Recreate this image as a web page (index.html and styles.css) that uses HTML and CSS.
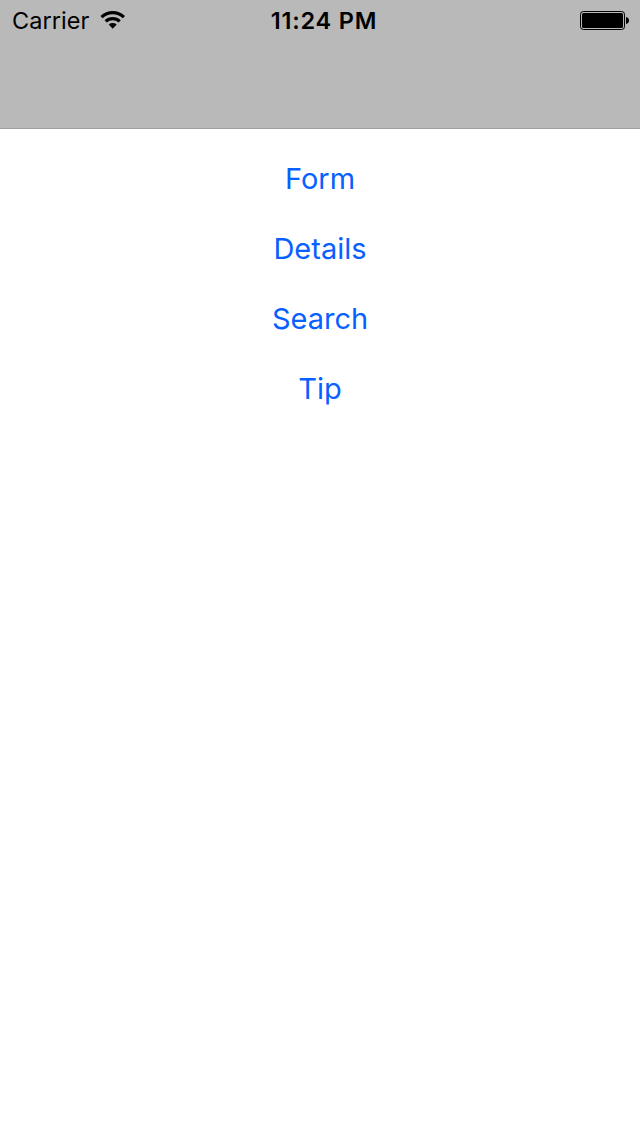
FILE: index.html
```html
<!DOCTYPE html>
<html lang="en">
<head>
<meta charset="utf-8">
<title>Menu</title>
<link rel="stylesheet" href="styles.css">
</head>
<body>
<header class="navbar">
  <div class="status">
    <div class="status-left">
      <span class="carrier">Carrier</span>
      <svg class="wifi" width="26" height="19" viewBox="0 0 26 19">
        <path d="M0.4 4.9Q5.8 0 12.7 0T25 4.9L22.8 7.2Q18.4 3.2 12.7 3.2T2.6 7.2Z"/>
        <path d="M4.6 9.2Q8 6.1 12.7 6.1T20.8 9.2L18.6 11.5Q16 9.3 12.7 9.3T6.8 11.5Z"/>
        <path d="M8.7 13.5Q10.4 12.1 12.7 12.1T16.7 13.5L12.7 17.8Z"/>
      </svg>
    </div>
    <span class="time">11:24 PM</span>
    <div class="status-right">
      <svg class="battery" width="50" height="19" viewBox="0 0 50 19">
        <rect x="0.5" y="0.5" width="44" height="18" rx="2.8" fill="none" stroke="#000"/>
        <rect x="2" y="2" width="41" height="15" rx="1.5"/>
        <path d="M46 6Q49 6.8 49 9.5T46 13Z"/>
      </svg>
    </div>
  </div>
</header>
<main class="menu">
  <a class="item form">Form</a>
  <a class="item details">Details</a>
  <a class="item search">Search</a>
  <a class="item tip">Tip</a>
</main>
</body>
</html>
```
FILE: styles.css
```css
body {
  margin: 0;
  min-height: 1136px;
  background: #fff;
  font-family: Inter, "Liberation Sans", sans-serif;
}
.navbar {
  box-sizing: border-box;
  height: 129px;
  background: #b9b9b9;
  border-bottom: 1px solid #a0a0a0;
}
.status {
  display: grid;
  grid-template-columns: 1fr auto 1fr;
  height: 41px;
  align-items: center;
  padding: 0 10px 0 12px;
  font-size: 23.5px;
  line-height: 41px;
}
.status-left { display: flex; align-items: center; gap: 11px; }
.status-right { display: flex; justify-content: flex-end; }
.wifi { margin-top: -1px; }
.carrier { letter-spacing: 0.05px; }
.time {
  font-weight: 600;
  font-size: 23.5px;
  letter-spacing: 0.8px;
  padding-left: 6px;
}
.menu {
  display: flex;
  flex-direction: column;
  align-items: center;
  padding-top: 15px;
}
.item {
  height: 70px;
  line-height: 69px;
  font-size: 29px;
  color: #0861ff;
}
```
